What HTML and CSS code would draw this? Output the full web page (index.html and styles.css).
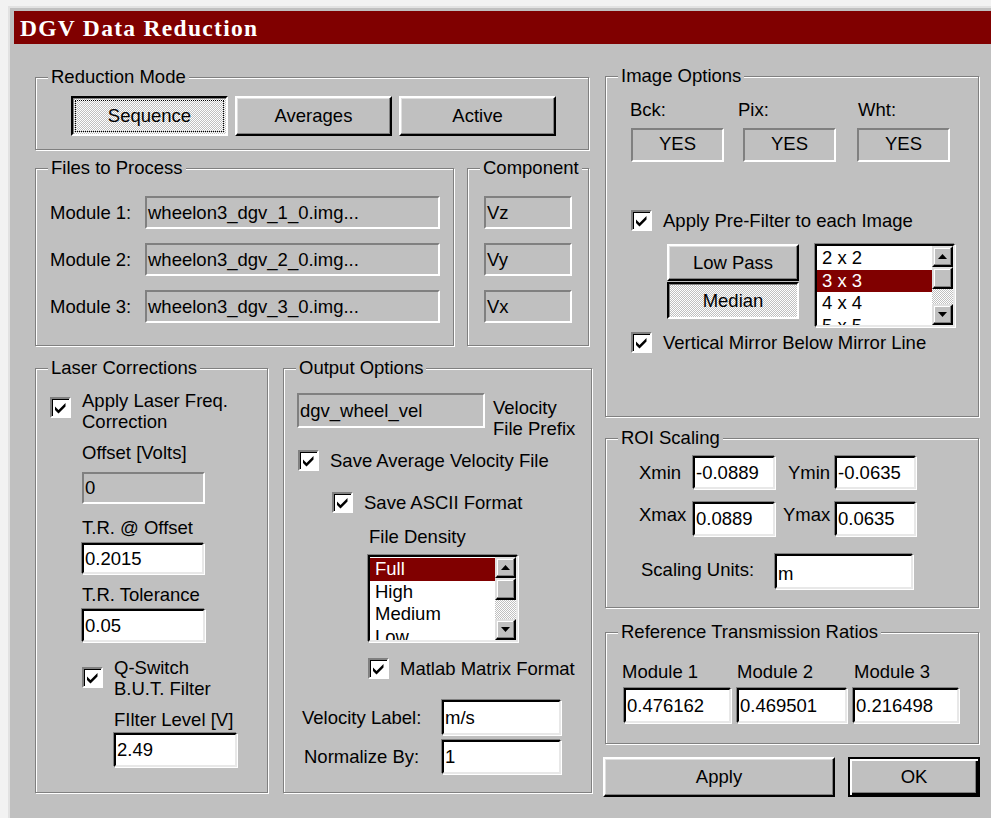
FILE: index.html
```html
<!DOCTYPE html>
<html lang="en">
<head>
<meta charset="utf-8">
<title>DGV Data Reduction</title>
<link rel="stylesheet" href="styles.css">
</head>
<body>
<div class="window">
  <div class="titlebar">DGV Data Reduction</div>
  <div class="client">
    <!-- left half: mode, files, laser and output groups -->
    <div class="col-left">
      <div class="group g-mode">
        <div class="legend">Reduction Mode</div>
        <div class="mode-body">
          <div class="btn pressed focus">Sequence</div>
          <div class="btn">Averages</div>
          <div class="btn">Active</div>
        </div>
      </div>

      <div class="row-files">
        <div class="group g-files">
          <div class="legend">Files to Process</div>
          <div class="files-body">
            <span>Module 1:</span><div class="field">wheelon3_dgv_1_0.img...</div>
            <span>Module 2:</span><div class="field">wheelon3_dgv_2_0.img...</div>
            <span>Module 3:</span><div class="field">wheelon3_dgv_3_0.img...</div>
          </div>
        </div>
        <div class="group g-comp">
          <div class="legend">Component</div>
          <div class="comp-body">
            <div class="field">Vz</div>
            <div class="field">Vy</div>
            <div class="field">Vx</div>
          </div>
        </div>
      </div>

      <div class="row-bottom">
        <div class="group g-laser">
          <div class="legend">Laser Corrections</div>
          <div class="laser-body">
            <div class="check-row lc-apply">
              <span class="check"><svg viewBox="0 0 17 17"><path d="M3 7.5 L6.5 11 L13.5 4 L13.5 7.5 L6.5 14.5 L3 11 Z"/></svg></span>
              <span class="two-line">Apply Laser Freq.<br>Correction</span>
            </div>
            <div class="lbl lc-offset-lbl">Offset [Volts]</div>
            <div class="field lc-offset">0</div>
            <div class="lbl lc-tr-lbl">T.R. @ Offset</div>
            <div class="input lc-tr">0.2015</div>
            <div class="lbl lc-tol-lbl">T.R. Tolerance</div>
            <div class="input lc-tol">0.05</div>
            <div class="check-row lc-q">
              <span class="check"><svg viewBox="0 0 17 17"><path d="M3 7.5 L6.5 11 L13.5 4 L13.5 7.5 L6.5 14.5 L3 11 Z"/></svg></span>
              <span class="two-line">Q-Switch<br>B.U.T. Filter</span>
            </div>
            <div class="lbl lc-fl-lbl">FIlter Level [V]</div>
            <div class="input lc-fl">2.49</div>
          </div>
        </div>

        <div class="group g-output">
          <div class="legend">Output Options</div>
          <div class="output-body">
            <div class="oo-prefix-row">
              <div class="field oo-prefix">dgv_wheel_vel</div>
              <span class="two-line oo-prefix-lbl">Velocity<br>File Prefix</span>
            </div>
            <div class="check-row oo-avg">
              <span class="check"><svg viewBox="0 0 17 17"><path d="M3 7.5 L6.5 11 L13.5 4 L13.5 7.5 L6.5 14.5 L3 11 Z"/></svg></span>
              <span class="one-line">Save Average Velocity File</span>
            </div>
            <div class="check-row oo-ascii">
              <span class="check"><svg viewBox="0 0 17 17"><path d="M3 7.5 L6.5 11 L13.5 4 L13.5 7.5 L6.5 14.5 L3 11 Z"/></svg></span>
              <span class="one-line">Save ASCII Format</span>
            </div>
            <div class="lbl oo-dens-lbl">File Density</div>
            <div class="listbox oo-list">
              <div class="lb-items">
                <div class="lb-item sel">Full</div>
                <div class="lb-item">High</div>
                <div class="lb-item">Medium</div>
                <div class="lb-item">Low</div>
              </div>
              <div class="scrollbar">
                <div class="sb-btn"><svg viewBox="0 0 9 5"><polygon points="4.5,0 9,5 0,5"/></svg></div>
                <div class="sb-thumb"></div>
                <div class="sb-track"></div>
                <div class="sb-btn"><svg viewBox="0 0 9 5"><polygon points="0,0 9,0 4.5,5"/></svg></div>
              </div>
            </div>
            <div class="check-row oo-matlab">
              <span class="check"><svg viewBox="0 0 17 17"><path d="M3 7.5 L6.5 11 L13.5 4 L13.5 7.5 L6.5 14.5 L3 11 Z"/></svg></span>
              <span class="one-line">Matlab Matrix Format</span>
            </div>
            <div class="oo-form">
              <span class="oo-vel-lbl">Velocity Label:</span>
              <div class="input oo-vel">m/s</div>
              <span class="oo-norm-lbl">Normalize By:</span>
              <div class="input oo-norm">1</div>
            </div>
          </div>
        </div>
      </div>
    </div>

    <!-- right half: image options, ROI, ratios and dialog buttons -->
    <div class="col-right">
      <div class="group g-image">
        <div class="legend">Image Options</div>
        <div class="io-body">
          <div class="io-heads">
            <div class="io-cell"><div class="lbl io-lbl">Bck:</div><div class="field yes">YES</div></div>
            <div class="io-cell"><div class="lbl io-lbl io-pix">Pix:</div><div class="field yes">YES</div></div>
            <div class="io-cell"><div class="lbl io-lbl io-wht">Wht:</div><div class="field yes">YES</div></div>
          </div>
          <div class="check-row io-prefilter">
            <span class="check"><svg viewBox="0 0 17 17"><path d="M3 7.5 L6.5 11 L13.5 4 L13.5 7.5 L6.5 14.5 L3 11 Z"/></svg></span>
            <span class="one-line">Apply Pre-Filter to each Image</span>
          </div>
          <div class="io-filter">
            <div class="io-btns">
              <div class="btn io-btn">Low Pass</div>
              <div class="btn pressed io-btn">Median</div>
            </div>
            <div class="listbox io-list">
              <div class="lb-items">
                <div class="lb-item">2 x 2</div>
                <div class="lb-item sel">3 x 3</div>
                <div class="lb-item">4 x 4</div>
                <div class="lb-item">5 x 5</div>
              </div>
              <div class="scrollbar">
                <div class="sb-btn"><svg viewBox="0 0 9 5"><polygon points="4.5,0 9,5 0,5"/></svg></div>
                <div class="sb-thumb"></div>
                <div class="sb-track"></div>
                <div class="sb-btn"><svg viewBox="0 0 9 5"><polygon points="0,0 9,0 4.5,5"/></svg></div>
              </div>
            </div>
          </div>
          <div class="check-row io-mirror">
            <span class="check"><svg viewBox="0 0 17 17"><path d="M3 7.5 L6.5 11 L13.5 4 L13.5 7.5 L6.5 14.5 L3 11 Z"/></svg></span>
            <span class="one-line">Vertical Mirror Below Mirror Line</span>
          </div>
        </div>
      </div>

      <div class="group g-roi">
        <div class="legend">ROI Scaling</div>
        <div class="roi-body">
          <div class="roi-grid">
            <span>Xmin</span><div class="input roi-in">-0.0889</div>
            <span class="roi-l2">Ymin</span><div class="input roi-in">-0.0635</div>
            <span class="roi-raised">Xmax</span><div class="input roi-in roi-low">0.0889</div>
            <span class="roi-l2b roi-raised">Ymax</span><div class="input roi-in roi-low">0.0635</div>
          </div>
          <div class="roi-units">
            <span class="roi-units-lbl">Scaling Units:</span>
            <div class="input roi-units-in">m</div>
          </div>
        </div>
      </div>

      <div class="group g-ratios">
        <div class="legend">Reference Transmission Ratios</div>
        <div class="ratios-body">
          <span class="rt-lbl rt-l1">Module 1</span>
          <span class="rt-lbl">Module 2</span>
          <span class="rt-lbl rt-l3">Module 3</span>
          <div class="input rt-in">0.476162</div>
          <div class="input rt-in">0.469501</div>
          <div class="input rt-in">0.216498</div>
        </div>
      </div>

      <div class="actions">
        <div class="btn act-apply">Apply</div>
        <div class="btn default act-ok">OK</div>
      </div>
    </div>
  </div>
</div>
</body>
</html>
```

FILE: styles.css
```css
* { box-sizing: border-box; }

html, body { margin: 0; }

body {
  width: 991px;
  height: 818px;
  overflow: hidden;
  background: #f2f2f2;
  font-family: "Liberation Sans", Arial, sans-serif;
  font-size: 18.5px;
  color: #000;
}

/* dialog frame */
.window {
  margin: 6px 0 0 8px;
  height: 812px;
  background: #c0c0c0;
  border-top: 2px solid #e2e2e2;
  border-left: 2px solid #e2e2e2;
  padding: 3px 0 0 4px;
}

.titlebar {
  height: 33px;
  line-height: 34px;
  padding-left: 6px;
  background: #800000;
  color: #fff;
  font-family: "Liberation Serif", "Times New Roman", serif;
  font-weight: bold;
  font-size: 23.5px;
  letter-spacing: 1.3px;
  white-space: nowrap;
}

.client {
  display: flex;
  padding-left: 21px;
}

.col-left {
  width: 557px;
  padding-top: 33px;
  display: flex;
  flex-direction: column;
}

.col-right {
  width: 377px;
  margin-left: 11px;
  padding-top: 32px;
  display: flex;
  flex-direction: column;
}

/* etched group box */
.group {
  border: 1px solid #808080;
  box-shadow: inset 1px 1px 0 #fff, 1px 1px 0 #fff;
}

.legend {
  width: fit-content;
  height: 20px;
  line-height: 20px;
  margin: -11px 0 -9px 12px;
  padding: 0 3px;
  background: #c0c0c0;
  white-space: nowrap;
}

.lbl {
  height: 20px;
  line-height: 20px;
  white-space: nowrap;
}

/* raised push button */
.btn {
  display: flex;
  align-items: center;
  justify-content: center;
  background: #c0c0c0;
  border: 2px solid;
  border-color: #fff #000 #000 #fff;
  box-shadow: inset -1px -1px 0 #808080, inset 1px 1px 0 #dfdfdf;
  white-space: nowrap;
}

.btn.pressed {
  border-color: #000 #fff #fff #000;
  box-shadow: inset 1px 1px 0 #808080;
  background: repeating-conic-gradient(#fff 0% 25%, #c0c0c0 0% 50%) 0 0 / 2px 2px;
}

.btn.focus {
  outline: 1px dotted #000;
  outline-offset: -5px;
}

.btn.default {
  border: 2px solid #000;
  box-shadow: inset 2px 2px 0 #fff, inset -2px -2px 0 #000, inset -3px -3px 0 #808080;
}

/* read-only gray box */
.field {
  background: #c0c0c0;
  border: 2px solid;
  border-color: #808080 #fff #fff #808080;
  padding-left: 1px;
  height: 33px;
  line-height: 29px;
  white-space: nowrap;
  overflow: hidden;
}

/* white edit box */
.input {
  background: #fff;
  border: 2px solid;
  border-color: #000 #e8e8e8 #e8e8e8 #000;
  box-shadow: -1px -1px 0 #808080, 1px 1px 0 #fff;
  padding: 0 0 0 1px;
  white-space: nowrap;
  overflow: hidden;
  display: flex;
  align-items: center;
}

/* checkbox */
.check-row {
  display: flex;
  align-items: flex-start;
  gap: 11px;
}

.check {
  flex: none;
  width: 21px;
  height: 21px;
  background: #fff;
  border: 2px solid;
  border-color: #808080 #fff #fff #808080;
  box-shadow: inset 1px 1px 0 #000;
  display: block;
}

.check svg {
  display: block;
  width: 17px;
  height: 17px;
  fill: #000;
}

.one-line {
  line-height: 21px;
  white-space: nowrap;
}

.two-line {
  line-height: 21px;
  white-space: nowrap;
}

/* list box with scroll bar */
.listbox {
  display: flex;
  background: #fff;
  border: 2px solid;
  border-color: #000 #e8e8e8 #e8e8e8 #000;
  box-shadow: -1px -1px 0 #808080, 1px 1px 0 #fff;
  overflow: hidden;
}

.lb-items {
  flex: 1;
  padding-top: 1px;
  overflow: hidden;
}

.lb-item {
  height: 22.5px;
  line-height: 22px;
  padding-left: 5px;
  white-space: nowrap;
}

.lb-item.sel {
  background: #800000;
  color: #fff;
}

.scrollbar {
  width: 21px;
  display: flex;
  flex-direction: column;
  background: repeating-conic-gradient(#fff 0% 25%, #c0c0c0 0% 50%) 0 0 / 2px 2px;
}

.sb-btn,
.sb-thumb {
  flex: none;
  height: 21px;
  background: #c0c0c0;
  border: 2px solid;
  border-color: #dfdfdf #000 #000 #dfdfdf;
  box-shadow: inset -1px -1px 0 #808080, inset 1px 1px 0 #fff;
  display: flex;
  align-items: center;
  justify-content: center;
}

.sb-btn svg {
  width: 9px;
  height: 5px;
  fill: #000;
}

.sb-thumb { height: 22px; }

.sb-track { flex: 1; }

/* Reduction Mode */
.g-mode {
  width: 554px;
  height: 73px;
}

.mode-body {
  display: flex;
  gap: 7px;
  padding: 18px 0 0 35px;
}

.mode-body .btn {
  width: 157px;
  height: 40px;
}

/* Files to Process / Component */
.row-files {
  display: flex;
  gap: 13px;
  margin-top: 18px;
  height: 178px;
}

.g-files { width: 419px; }
.g-comp { width: 122px; }

.files-body {
  display: grid;
  grid-template-columns: 95px 295px;
  row-gap: 14px;
  align-items: center;
  padding: 27px 0 0 14px;
}

.comp-body {
  display: flex;
  flex-direction: column;
  gap: 14px;
  padding: 27px 0 0 16px;
}

.comp-body .field { width: 88px; }

/* Laser Corrections / Output Options */
.row-bottom {
  display: flex;
  gap: 15px;
  margin-top: 22px;
  height: 425px;
}

.g-laser { width: 233px; }
.g-output { width: 309px; }

.laser-body {
  padding-left: 14px;
  display: flex;
  flex-direction: column;
  align-items: flex-start;
}

.lc-apply { margin-top: 21px; }
.lc-apply .check { margin-top: 7px; }

.lc-offset-lbl { margin: 11px 0 0 32px; }
.lc-offset { margin: 9px 0 0 32px; width: 123px; height: 32px; line-height: 28px; }
.lc-tr-lbl { margin: 14px 0 0 32px; }
.lc-tr { margin: 5px 0 0 32px; width: 122px; height: 31px; }
.lc-tol-lbl { margin: 11px 0 0 32px; }
.lc-tol { margin: 4px 0 0 32px; width: 123px; height: 33px; }
.lc-q { margin: 15px 0 0 32px; }
.lc-q .check { margin-top: 10px; }
.lc-fl-lbl { margin: 11px 0 0 64px; }
.lc-fl { margin: 3px 0 0 64px; width: 123px; height: 34px; }

.output-body {
  padding-left: 13px;
  display: flex;
  flex-direction: column;
  align-items: flex-start;
}

.oo-prefix-row {
  margin-top: 24px;
  display: flex;
  gap: 8px;
}

.oo-prefix { width: 188px; height: 35px; line-height: 31px; }
.oo-prefix-lbl { margin-top: 4px; }

.oo-avg { margin: 11px 0 0 1px; }
.oo-ascii { margin: 21px 0 0 35px; }
.oo-dens-lbl { margin: 14px 0 0 72px; }
.oo-list { margin: 8px 0 0 71px; width: 150px; height: 87px; }
.oo-matlab { margin: 16px 0 0 71px; }

.oo-form {
  margin-top: 21px;
  display: grid;
  grid-template-columns: 145px 119px;
  row-gap: 5px;
  align-items: center;
}

.oo-vel-lbl { padding-left: 5px; }
.oo-norm-lbl { padding-left: 7px; }
.oo-vel { height: 35px; }
.oo-norm { height: 34px; }

/* Image Options */
.g-image {
  margin-left: 2px;
  width: 374px;
  height: 341px;
}

.io-body { padding-left: 25px; }

.io-heads {
  margin-top: 23px;
  display: flex;
}

.io-cell { width: 93px; }
.io-cell + .io-cell { margin-left: 19px; }
.io-cell:last-child { margin-left: 21px; }

.io-lbl { margin: 0 0 8px -1px; }
.io-pix { margin-left: -5px; }
.io-wht { margin-left: 1px; }

.yes {
  height: 34px;
  line-height: 28px;
  text-align: center;
  padding-left: 0;
}

.io-prefilter { margin-top: 48px; }

.io-filter {
  margin: 13px 0 0 36px;
  display: flex;
  gap: 16px;
}

.io-btns {
  display: flex;
  flex-direction: column;
  gap: 1px;
}

.io-btn { width: 132px; height: 37px; }

.io-list { width: 140px; height: 83px; }

.io-mirror { margin-top: 5px; }

/* ROI Scaling */
.g-roi {
  margin: 21px 0 0 2px;
  width: 374px;
  height: 170px;
}

.roi-body { padding-left: 33px; }

.roi-grid {
  margin-top: 17px;
  display: grid;
  grid-template-columns: 54px 82px 60px 81px;
  grid-template-rows: 33px 34px;
  row-gap: 13px;
  align-items: center;
}

.roi-l2 { padding-left: 13px; }
.roi-l2b { padding-left: 8px; }
.roi-in { height: 33px; }
.roi-low { height: 34px; }
.roi-raised { align-self: start; line-height: 21px; margin-top: 2px; }

.roi-units {
  margin-top: 18px;
  display: grid;
  grid-template-columns: 136px 138px;
  align-items: center;
}

.roi-units-lbl { padding-left: 2px; margin-bottom: 4px; }
.roi-units-in { height: 35px; padding-top: 4px; }

/* Reference Transmission Ratios */
.g-ratios {
  margin: 24px 0 0 2px;
  width: 374px;
  height: 112px;
}

.ratios-body {
  margin-top: 29px;
  padding-left: 18px;
  display: grid;
  grid-template-columns: 107px 110px 106px;
  grid-template-rows: 20px 35px;
  column-gap: 6px;
  row-gap: 6px;
  align-items: center;
}

.rt-lbl { line-height: 20px; white-space: nowrap; }
.rt-l1 { margin-left: -2px; }
.rt-l3 { margin-left: 1px; }
.rt-in { height: 35px; }

/* dialog buttons */
.actions {
  margin-top: 13px;
  display: flex;
  gap: 13px;
}

.actions .btn { height: 40px; }
.act-apply { width: 232px; }
.act-ok { width: 132px; }
```
